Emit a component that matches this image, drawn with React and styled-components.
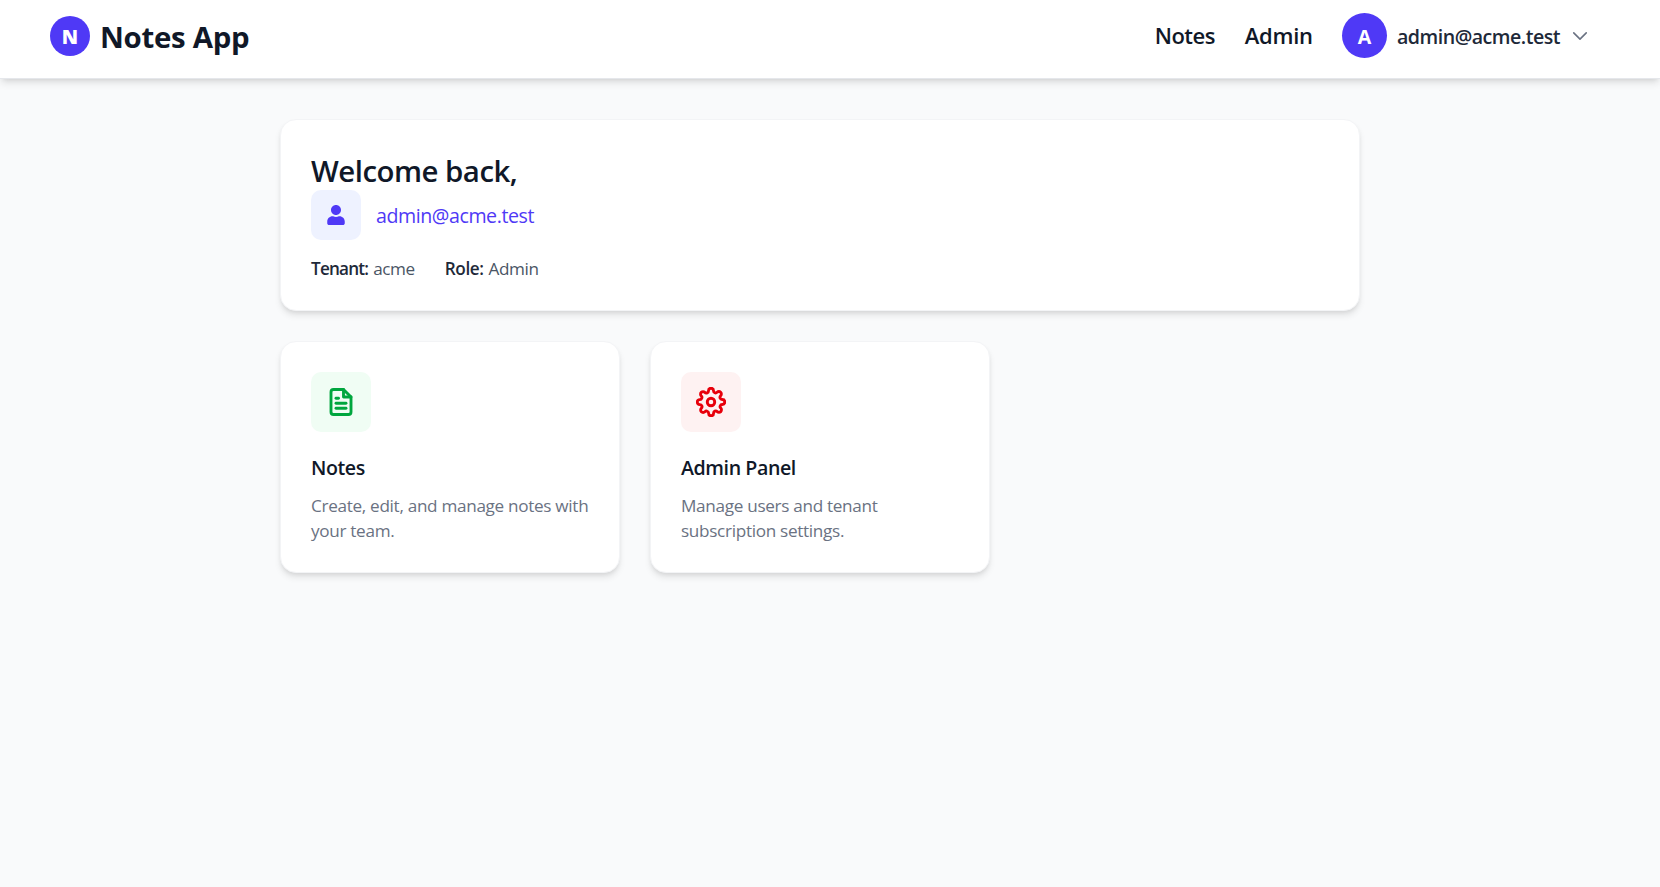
import React from "react";
import styled, { createGlobalStyle } from "styled-components";
import { FaUser } from "react-icons/fa";
import { FiFileText, FiSettings } from "react-icons/fi";

const GlobalStyle = createGlobalStyle`
  * { box-sizing: border-box; }
  body {
    margin: 0;
    background: #f9fafb;
    color: #101828;
    font-family: "Segoe UI", "Open Sans", "Noto Sans", sans-serif;
  }
  h1, h2, p { margin: 0; }
`;

const Page = styled.div`
  min-height: 100vh;
  background: #f9fafb;
`;

const Header = styled.header`
  display: flex;
  justify-content: space-between;
  align-items: flex-start;
  height: 79px;
  padding: 13px 70px 0 50px;
  background: #fff;
  border-bottom: 1px solid #e5e7eb;
  box-shadow: 0 5px 7.5px -1.25px rgba(0, 0, 0, 0.1), 0 2.5px 5px -2.5px rgba(0, 0, 0, 0.1);
`;

const Brand = styled.a`
  display: flex;
  align-items: center;
  gap: 10px;
  height: 40px;
  margin-top: 3px;
`;

const Disc = styled.span`
  display: flex;
  align-items: center;
  justify-content: center;
  flex: none;
  width: ${(p) => p.$size}px;
  height: ${(p) => p.$size}px;
  padding-top: ${(p) => p.$drop}px;
  border-radius: 50%;
  background: #4f39f6;
  color: #fff;
  font-size: 19.6px;
  line-height: 27px;
  font-weight: ${(p) => p.$weight};
`;

const BrandName = styled.span`
  padding-top: 2px;
  font-size: 29.4px;
  line-height: 40px;
  font-weight: 700;
  letter-spacing: -0.3px;
  white-space: nowrap;
`;

const Nav = styled.nav`
  display: flex;
  align-items: center;
  gap: 30px;
  height: 45px;
`;

const NavLink = styled.a`
  width: ${(p) => p.$width}px;
  padding: 0 0 1px 0.7px;
  font-size: 22px;
  line-height: 30px;
  font-weight: 600;
  letter-spacing: ${(p) => p.$spacing}px;
  white-space: nowrap;
`;

const Account = styled.div`
  display: flex;
  align-items: center;
  gap: 10px;
`;

const AccountEmail = styled.span`
  width: 163px;
  padding-top: 2px;
  color: #1e2939;
  font-size: 19.6px;
  line-height: 27px;
  font-weight: 600;
  letter-spacing: -0.5px;
  white-space: nowrap;
`;

const Chevron = styled.svg`
  display: block;
  width: 20px;
  height: 20px;
  margin-top: 1px;
  color: #6a7282;
`;

const Main = styled.main`
  display: flex;
  flex-direction: column;
  gap: 30px;
  width: 1080px;
  margin: 40px 0 0 280px;
`;

const Card = styled.section`
  padding: 30px 30px 29px;
  background: #fff;
  border: 1px solid #f3f4f6;
  border-radius: 16px;
  box-shadow: 0 5px 7.5px -1.25px rgba(0, 0, 0, 0.1), 0 2.5px 5px -2.5px rgba(0, 0, 0, 0.1);
`;

const Welcome = styled.h1`
  margin-bottom: -2px;
  font-size: 29.4px;
  line-height: 42px;
  font-weight: 600;
  letter-spacing: -0.5px;
`;

const UserRow = styled.div`
  display: flex;
  align-items: center;
  gap: 15px;
`;

const IconTile = styled.div`
  display: flex;
  align-items: center;
  justify-content: center;
  width: ${(p) => p.$size}px;
  height: ${(p) => p.$size}px;
  border-radius: 10px;
  background: ${(p) => p.$bg};
  color: ${(p) => p.$color};
`;

const UserEmail = styled.span`
  padding-top: 1px;
  color: #4f39f6;
  font-size: 19.6px;
  line-height: 27px;
  letter-spacing: -0.43px;
`;

const Meta = styled.div`
  display: flex;
  gap: 30px;
  margin-top: 16px;
  color: #4a5565;
  font-size: 17.15px;
  line-height: 25px;
`;

const MetaItem = styled.span`
  display: flex;
  gap: 5px;
  letter-spacing: -0.4px;
`;

const MetaLabel = styled.b`
  color: #1e2939;
  font-weight: 600;
  letter-spacing: ${(p) => p.$spacing}px;
`;

const Tiles = styled.div`
  display: grid;
  grid-template-columns: repeat(3, 1fr);
  gap: 30px;
`;

const TileTitle = styled.h2`
  margin-top: 20px;
  font-size: 19.6px;
  line-height: 31px;
  font-weight: 600;
  letter-spacing: -0.42px;
`;

const TileText = styled.p`
  margin: 10px -6px 0 0;
  color: #6a7282;
  font-size: 17.15px;
  line-height: 25px;
  letter-spacing: -0.31px;
`;

export default function App() {
  return (
    <Page>
      <GlobalStyle />
      <Header>
        <Brand>
          <Disc $size={40} $drop={1} $weight={800}>N</Disc>
          <BrandName>Notes App</BrandName>
        </Brand>
        <Nav>
          <NavLink $width={60} $spacing={-0.5}>Notes</NavLink>
          <NavLink $width={68} $spacing={-0.25}>Admin</NavLink>
          <Account>
            <Disc $size={45} $drop={2} $weight={700}>A</Disc>
            <AccountEmail>admin@acme.test</AccountEmail>
            <Chevron viewBox="0 0 24 24" fill="none" stroke="currentColor" strokeWidth="1.9" strokeLinecap="round" strokeLinejoin="round">
              <path d="m19.5 8.25-7.5 7.5-7.5-7.5" />
            </Chevron>
          </Account>
        </Nav>
      </Header>
      <Main>
        <Card>
          <Welcome>Welcome back,</Welcome>
          <UserRow>
            <IconTile $size={50} $bg="#eef2ff" $color="#4f39f6">
              <FaUser size={20} />
            </IconTile>
            <UserEmail>admin@acme.test</UserEmail>
          </UserRow>
          <Meta>
            <MetaItem>
              <MetaLabel $spacing={-0.8}>Tenant:</MetaLabel>acme
            </MetaItem>
            <MetaItem>
              <MetaLabel $spacing={-0.4}>Role:</MetaLabel>Admin
            </MetaItem>
          </Meta>
        </Card>
        <Tiles>
          <Card>
            <IconTile $size={60} $bg="#f0fdf4" $color="#00a63e">
              <FiFileText size={30} strokeWidth={2.3} />
            </IconTile>
            <TileTitle>Notes</TileTitle>
            <TileText>Create, edit, and manage notes with your team.</TileText>
          </Card>
          <Card>
            <IconTile $size={60} $bg="#fef2f2" $color="#e7000b">
              <FiSettings size={30} strokeWidth={2.3} />
            </IconTile>
            <TileTitle>Admin Panel</TileTitle>
            <TileText>Manage users and tenant subscription settings.</TileText>
          </Card>
        </Tiles>
      </Main>
    </Page>
  );
}
